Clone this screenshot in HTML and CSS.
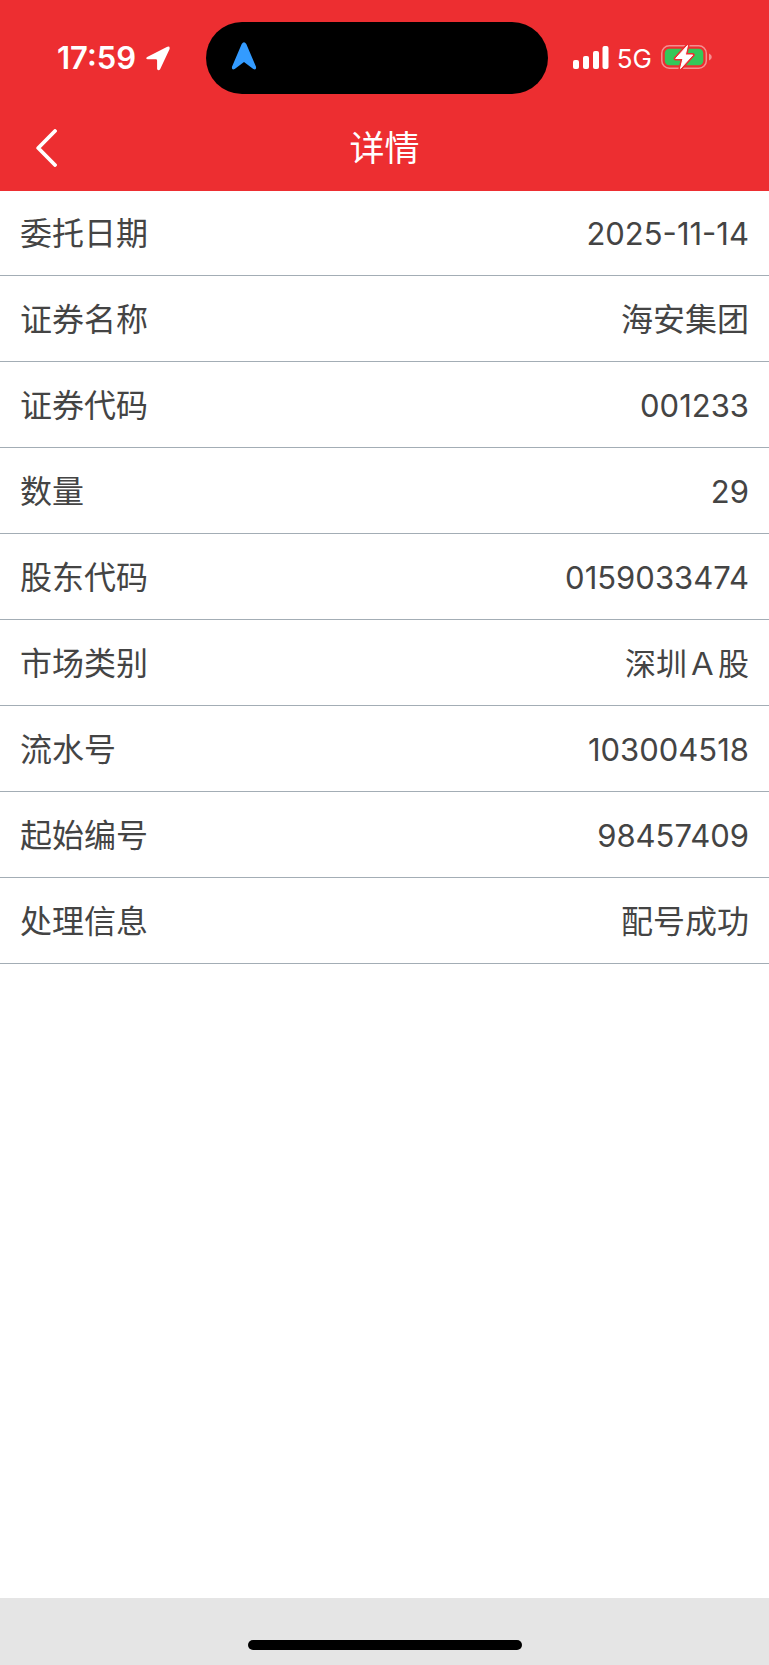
FILE: index.html
```html
<!DOCTYPE html>
<html lang="zh-CN">
<head>
<meta charset="utf-8">
<meta name="viewport" content="width=device-width, initial-scale=1">
<title>详情</title>
<link rel="stylesheet" href="styles.css">
</head>
<body>
<header class="header">
  <div class="status">
    <span class="time">17:59</span>
    <svg class="location" width="24" height="25" viewBox="0 0 24 25" aria-hidden="true"><path d="M1.2 11.1 L20.8 .9 Q24.4 -.3 23.5 3.2 L14 23.6 Q12.1 25.4 11.1 23 V14.5 Q11.1 13.3 9.9 13.3 H1.5 Q-1 12.6 1.2 11.1Z" fill="#fff"/></svg>
    <div class="island">
      <svg width="26" height="28" viewBox="0 0 26 28" aria-hidden="true"><path d="M10.7 2 Q13 -1.5 15.3 2 L25 24.7 Q25.6 28.4 22.3 27 L13 20 L3.700 27 Q.4 28.400 1 24.700Z" fill="#339bff"/></svg>
    </div>
    <svg class="signal" width="36" height="23" viewBox="0 0 36 23" aria-hidden="true"><g fill="#fff"><rect x="0" y="14" width="6" height="9" rx="2"/><rect x="10" y="10" width="6" height="13" rx="2"/><rect x="20" y="5" width="6" height="18" rx="2"/><rect x="29.500" y="0" width="6" height="23" rx="2"/></g></svg>
    <span class="network">5G</span>
    <svg class="battery" width="51" height="26" viewBox="0 0 51 26" aria-hidden="true">
      <rect x=".8" y="1.800" width="44.500" height="22.400" rx="7.500" fill="none" stroke="#f58e90" stroke-width="1.500"/>
      <path d="M48 9.500 Q50.800 10.500 50.800 13 T48 16.500Z" fill="#f58e90"/>
      <rect x="3.800" y="4.800" width="38.500" height="16.400" rx="4.500" fill="#34c759"/>
      <path d="M26.500 1.500 L14.700 14.500 H22 L19.500 24.500 L31.700 11 H24.300Z" fill="#fff" stroke="#ed2e31" stroke-width="4" stroke-linejoin="round"/>
      <path d="M26.500 1.500 L14.700 14.500 H22 L19.500 24.500 L31.700 11 H24.300Z" fill="#fff" stroke="#fff" stroke-width="1" stroke-linejoin="round"/>
    </svg>
  </div>
  <nav class="nav">
    <button class="back" type="button" aria-label="返回"><svg width="21" height="38" viewBox="0 0 21 38" aria-hidden="true"><path d="M19 2 L2.200 19 L19 36" fill="none" stroke="#fff" stroke-width="3.800" stroke-linecap="round" stroke-linejoin="round"/></svg></button>
    <h1 class="title">详情</h1>
  </nav>
</header>
<main class="content">
  <dl class="list">
    <div class="row"><dt>委托日期</dt><dd class="number">2025-11-14</dd></div>
    <div class="row"><dt>证券名称</dt><dd>海安集团</dd></div>
    <div class="row"><dt>证券代码</dt><dd class="number">001233</dd></div>
    <div class="row"><dt>数量</dt><dd class="number">29</dd></div>
    <div class="row"><dt>股东代码</dt><dd class="number">0159033474</dd></div>
    <div class="row"><dt>市场类别</dt><dd class="number">深圳Ａ股</dd></div>
    <div class="row"><dt>流水号</dt><dd class="number">103004518</dd></div>
    <div class="row"><dt>起始编号</dt><dd class="number">98457409</dd></div>
    <div class="row"><dt>处理信息</dt><dd>配号成功</dd></div>
  </dl>
</main>
<footer class="footer"><div class="home"></div></footer>
</body>
</html>
```
FILE: styles.css
```css
* { box-sizing: border-box; }
body {
  margin: 0;
  min-height: 100vh;
  display: flex;
  flex-direction: column;
  background: #fff;
  color: #444;
  font-family: Inter, "Noto Sans CJK SC", sans-serif;
  font-size: 32px;
}
.header {
  background: #ed2e31;
  color: #fff;
  padding-top: 22px;
}
.status {
  display: flex;
  align-items: center;
  height: 72px;
  padding: 0 57px;
}
.time {
  font-size: 31px;
  font-weight: 600;
  line-height: 40px;
}
.location { margin-left: 10px; }
.island {
  flex: 1;
  display: flex;
  align-items: center;
  height: 72px;
  margin: 0 25px 0 36px;
  padding: 0 25px 4px;
  border-radius: 36px;
  background: #000;
}
.signal, .battery { margin-bottom: 2px; }
.network {
  margin: 0 9px 0 8px;
  font-size: 26px;
  font-weight: 400;
}
.nav {
  display: grid;
  grid-template-columns: 1fr auto 1fr;
  align-items: center;
  height: 97px;
  padding: 10px 36px 0;
}
.back {
  display: flex;
  justify-self: start;
  padding: 0;
  border: 0;
  background: none;
}
.title {
  margin: 0;
  font-size: 35px;
  font-weight: 400;
  line-height: 48px;
}
.content { flex: 1; }
.list { margin: 0; }
.row {
  display: flex;
  align-items: center;
  justify-content: space-between;
  height: 86px;
  padding: 2px 20px 0;
  border-bottom: 1px solid #a3adb5;
}
.row:first-child { height: 85px; }
dt, dd {
  margin: 0;
  line-height: 44px;
}
.number { font-size: 31px; }
.footer {
  display: flex;
  align-items: flex-end;
  justify-content: center;
  height: 67px;
  padding-bottom: 15px;
  background: #e5e5e5;
}
.home {
  width: 274px;
  height: 10px;
  border-radius: 5px;
  background: #000;
}
```
